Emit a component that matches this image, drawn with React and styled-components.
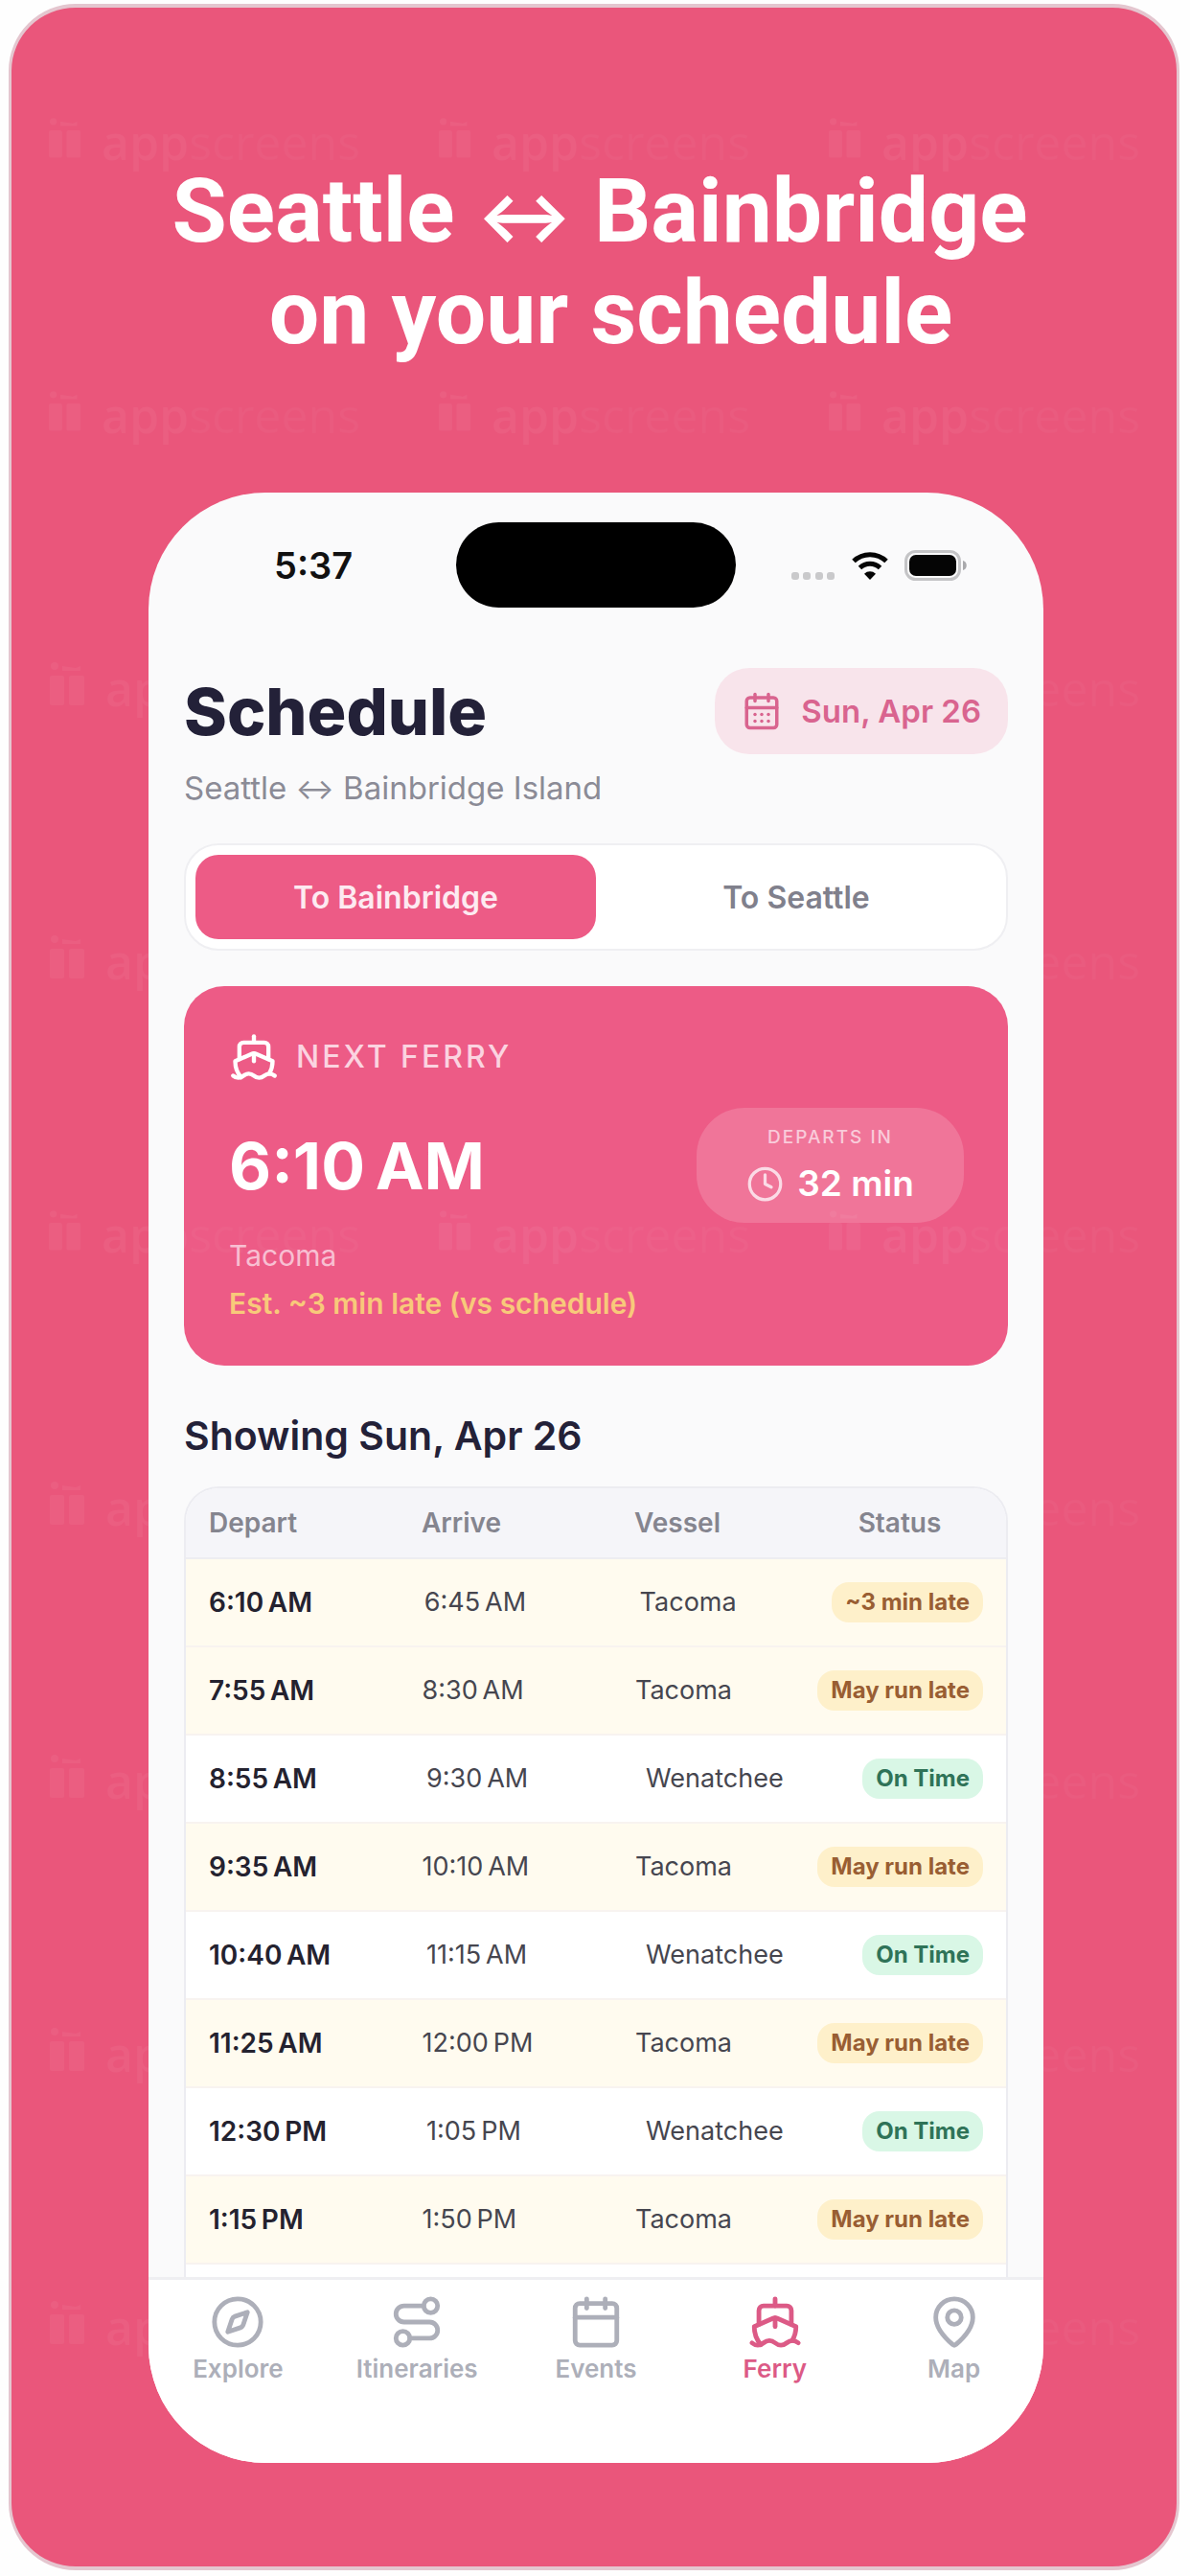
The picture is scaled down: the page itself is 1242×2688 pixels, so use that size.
import styled, { createGlobalStyle } from "styled-components";
import { CalendarDays, Calendar, Clock, Compass, MapPin, Route, Ship } from "lucide-react";

const GlobalStyle = createGlobalStyle`
*, *::before, *::after {
box-sizing: border-box;
}
body {
margin: 0;
background-color: #fefefe;
font-family: Inter, "Liberation Sans", sans-serif;
}
h1, h2, p {
margin: 0;
}
`

const Page = styled.div`
padding: 4px 11px 6px 9px;
`
const Poster = styled.main`
position: relative;
overflow: hidden;
padding: 160px 139px 108px 143px;
border: 3px solid #e4c6cf;
border-top-width: 4px;
border-bottom-width: 4px;
border-radius: 70px;
background-color: #ea567b;
`
const Headline = styled.p`
padding-left: 8px;
font-family: Roboto, Inter, sans-serif;
font-size: 93px;
font-weight: 700;
line-height: 106px;
text-align: center;
white-space: pre;
color: #fff;
`
const Arrow = styled.span`
font-family: Inter, sans-serif;
font-size: ${({ $size }) => $size}px;
line-height: 1;
`

const Watermarks = styled.div`
position: absolute;
inset: 0;
display: grid;
grid-template-columns: repeat(3, 407px);
grid-auto-rows: 285px;
padding: 108px 0 0 28px;
overflow: hidden;
pointer-events: none;
`
const Mark = styled.div`
display: flex;
align-items: flex-start;
justify-content: ${({ $end }) => ($end ? "flex-end" : "flex-start")};
gap: 18px;
width: 336px;
font-family: "Open Sans", sans-serif;
font-size: 50px;
line-height: 64px;
color: rgba(255, 255, 255, 0.03);
`
const MarkStrong = styled.b`
font-weight: 600;
color: rgba(255, 255, 255, 0.05);
`

const Phone = styled.div`
margin-top: 134px;
overflow: hidden;
border-radius: 122px;
background-color: #fafafb;
`
const StatusBar = styled.div`
display: grid;
grid-template-columns: 1fr 292px 1fr;
align-items: center;
padding-top: 31px;
`
const Time = styled.span`
padding-left: 131px;
font-size: 38px;
font-weight: 600;
line-height: 50px;
color: #111;
`
const Island = styled.div`
height: 89px;
border-radius: 45px;
background-color: #000;
`
const StatusIcons = styled.div`
display: flex;
align-items: center;
justify-content: flex-end;
gap: 17px;
padding-right: 80px;
`

const Content = styled.div`
padding: 63px 37px 0;
`
const Header = styled.header`
display: flex;
justify-content: space-between;
align-items: center;
`
const Title = styled.h1`
font-size: 68px;
font-weight: 800;
line-height: 90px;
color: #232138;
`
const DateButton = styled.button`
display: flex;
align-items: center;
gap: 20px;
height: 90px;
padding: 0 28px;
border: none;
border-radius: 36px;
background-color: #f8e4eb;
font-family: inherit;
font-size: 33px;
font-weight: 600;
color: #d9648f;
`
const Subtitle = styled.p`
margin-top: 15px;
font-size: 33px;
line-height: 40px;
color: #8b8b96;
`
const Segmented = styled.div`
display: flex;
margin-top: 38px;
padding: 10px;
border: 2px solid #efeff2;
border-radius: 36px;
background-color: #fff;
`
const Segment = styled.button`
flex: 1;
height: 88px;
border: none;
border-radius: 24px;
background-color: ${({ $active }) => ($active ? "#ed5b86" : "transparent")};
font-family: inherit;
font-size: 32px;
font-weight: 600;
color: ${({ $active }) => ($active ? "#fdeaf1" : "#80808c")};
`

const FerryCard = styled.section`
margin-top: 37px;
padding: 48px 46px 40px 47px;
border-radius: 42px;
background-color: #ed5b86;
color: #fff;
`
const CardLabel = styled.p`
display: flex;
align-items: center;
gap: 18px;
font-size: 32px;
font-weight: 500;
line-height: 50px;
letter-spacing: 3px;
color: #fbd3e0;
`
const CardRow = styled.div`
display: flex;
justify-content: space-between;
align-items: center;
margin-top: 27px;
margin-bottom: 9px;
`
const NextTime = styled.p`
font-size: 68px;
font-weight: 700;
line-height: 80px;
`
const Countdown = styled.div`
display: flex;
flex-direction: column;
align-items: center;
gap: 12px;
width: 279px;
padding: 17px 0 19px;
border-radius: 50px;
background-color: rgba(255, 255, 255, 0.16);
`
const CountdownLabel = styled.span`
font-size: 19px;
font-weight: 500;
line-height: 28px;
letter-spacing: 2px;
color: #f9cbda;
`
const CountdownValue = styled.span`
display: flex;
align-items: center;
gap: 14px;
font-size: 37px;
font-weight: 600;
line-height: 44px;
`
const CardNote = styled.p`
font-size: 30px;
font-weight: ${({ $late }) => ($late ? 600 : 400)};
line-height: 50px;
color: ${({ $late }) => ($late ? "#f8c97a" : "#f8bfd2")};
`

const ListTitle = styled.h2`
margin-top: 48px;
font-size: 41px;
font-weight: 600;
line-height: 50px;
color: #232138;
`
const TableFrame = styled.div`
margin-top: 28px;
padding-bottom: 13px;
overflow: hidden;
border: 2px solid #ececf1;
border-bottom: none;
border-radius: 36px 36px 0 0;
background-color: #fff;
`
const Table = styled.table`
display: block;
line-height: 36px;
color: #46464f;
thead, tbody {
display: block;
}
`
const columns = {
    head: "222fr 222fr 190fr 174fr",
    late: "224fr 224fr 200fr auto",
    risk: "222fr 222fr 190fr auto",
    ok: "227fr 229fr 226fr auto",
}
const Row = styled.tr`
display: grid;
grid-template-columns: ${({ $kind }) => columns[$kind]};
align-items: center;
height: ${({ $kind }) => ($kind === "head" ? 74 : 92)}px;
padding: 0 24px;
border-bottom: 2px solid ${({ $kind }) => ($kind === "head" ? "#ededf1" : "#f8f3f0")};
background-color: ${({ $kind }) => ({ head: "#f5f5f9", ok: "#fff" })[$kind] || "#fffbef"};
`
const HeadCell = styled.th`
padding: 0;
font-size: 28px;
font-weight: 600;
text-align: ${({ $center }) => ($center ? "center" : "left")};
color: #85858f;
`
const Cell = styled.td`
padding: 0;
font-size: ${({ $strong }) => ($strong ? 28 : 27)}px;
font-weight: ${({ $strong }) => ($strong ? 600 : 400)};
color: ${({ $strong }) => ($strong ? "#24222f" : "inherit")};
`
const Badge = styled.span`
display: block;
padding: 3px 14px;
border-radius: 18px;
background-color: ${({ $kind }) => ($kind === "ok" ? "#d9f7e6" : "#fef0ca")};
font-size: 24px;
font-weight: 700;
color: ${({ $kind }) => ($kind === "ok" ? "#2f7358" : "#995e33")};
`

const TabBar = styled.nav`
display: grid;
grid-template-columns: repeat(5, 1fr);
padding: 15px 0 82px;
border-top: 3px solid #efeff2;
background-color: #fff;
`
const Tab = styled.a`
display: flex;
flex-direction: column;
align-items: center;
gap: 4px;
font-size: 26px;
font-weight: 600;
line-height: 32px;
text-decoration: none;
color: ${({ $active }) => ($active ? "#dc5a86" : "#adafb9")};
`

const sailings = [
    { depart: "6:10\u202fAM", arrive: "6:45\u202fAM", vessel: "Tacoma", status: "~3 min late", kind: "late" },
    { depart: "7:55\u202fAM", arrive: "8:30\u202fAM", vessel: "Tacoma", status: "May run late", kind: "risk" },
    { depart: "8:55\u202fAM", arrive: "9:30\u202fAM", vessel: "Wenatchee", status: "On Time", kind: "ok" },
    { depart: "9:35\u202fAM", arrive: "10:10\u202fAM", vessel: "Tacoma", status: "May run late", kind: "risk" },
    { depart: "10:40\u202fAM", arrive: "11:15\u202fAM", vessel: "Wenatchee", status: "On Time", kind: "ok" },
    { depart: "11:25\u202fAM", arrive: "12:00\u202fPM", vessel: "Tacoma", status: "May run late", kind: "risk" },
    { depart: "12:30\u202fPM", arrive: "1:05\u202fPM", vessel: "Wenatchee", status: "On Time", kind: "ok" },
    { depart: "1:15\u202fPM", arrive: "1:50\u202fPM", vessel: "Tacoma", status: "May run late", kind: "risk" },
]

const tabs = [
    { label: "Explore", icon: Compass },
    { label: "Itineraries", icon: Route },
    { label: "Events", icon: Calendar },
    { label: "Ferry", icon: Ship, active: true },
    { label: "Map", icon: MapPin },
]

// rows where the mark shows across the full width, the others show at the sides only
const openRows = [0, 1, 4]

const MarkLogo = () => (
    <svg width="52" height="64" viewBox="0 0 52 64" fill="#fff" fillOpacity="0.05">
        <circle cx="17" cy="9" r="4" />
        <path d="M25 9l14 2 5-2v5H25z" />
        <rect x="12" y="19" width="15" height="31" rx="2" />
        <rect x="32" y="19" width="16" height="31" rx="2" />
    </svg>
)

const WatermarkLayer = () => (
    <Watermarks aria-hidden="true">
        {Array.from({ length: 27 }, (_, i) => {
            const column = i % 3
            if (openRows.includes(Math.floor(i / 3))) {
                return <Mark key={i}><MarkLogo /><span><MarkStrong>app</MarkStrong>screens</span></Mark>
            }
            if (column === 0) return <Mark key={i}><MarkLogo /><MarkStrong>ap</MarkStrong></Mark>
            if (column === 2) return <Mark key={i} $end>eens</Mark>
            return <div key={i} />
        })}
    </Watermarks>
)

const SignalIcons = () => (
    <StatusIcons>
        <svg width="46" height="32" viewBox="0 0 46 32" fill="#c9c9cb">
            <rect x="0" y="23" width="8" height="8" rx="3" />
            <rect x="12" y="23" width="8" height="8" rx="3" />
            <rect x="25" y="23" width="8" height="8" rx="3" />
            <rect x="37" y="23" width="8" height="8" rx="3" />
        </svg>
        <svg width="38" height="32" viewBox="0 0 38 32" fill="none" stroke="#050505" strokeWidth="5">
            <path d="M2 11.5a24.5 24.5 0 0 1 34 0" />
            <path d="M8.5 18.5a15 15 0 0 1 21 0" />
            <path d="M19 31l-6-6.300a8.700 8.700 0 0 1 12 0z" fill="#050505" stroke="none" />
        </svg>
        <svg width="65" height="32" viewBox="0 0 65 32">
            <rect x="1.500" y="1.500" width="56" height="29" rx="10" fill="#fafafb" stroke="#c4c4c6" strokeWidth="3" />
            <rect x="5" y="5" width="49" height="22" rx="7" fill="#050505" />
            <path d="M61 11c5 1 5 9 0 10z" fill="#a9a9ac" />
        </svg>
    </StatusIcons>
)

const Timetable = () => (
    <TableFrame>
        <Table>
            <thead>
                <Row $kind="head">
                    <HeadCell>Depart</HeadCell>
                    <HeadCell>Arrive</HeadCell>
                    <HeadCell>Vessel</HeadCell>
                    <HeadCell $center>Status</HeadCell>
                </Row>
            </thead>
            <tbody>
                {sailings.map(({ depart, arrive, vessel, status, kind }) => (
                    <Row key={depart} $kind={kind}>
                        <Cell $strong>{depart}</Cell>
                        <Cell>{arrive}</Cell>
                        <Cell>{vessel}</Cell>
                        <Cell><Badge $kind={kind}>{status}</Badge></Cell>
                    </Row>
                ))}
            </tbody>
        </Table>
    </TableFrame>
)

const App = () => {
    return (
    <Page>
        <GlobalStyle />
        <Poster>
            <Headline>Seattle <Arrow $size={74}>↔</Arrow>{" Bainbridge\n on your schedule"}</Headline>
            <Phone>
                <StatusBar>
                    <Time>5:37</Time>
                    <Island />
                    <SignalIcons />
                </StatusBar>
                <Content>
                    <Header>
                        <Title>Schedule</Title>
                        <DateButton type="button"><CalendarDays size={42} />Sun, Apr 26</DateButton>
                    </Header>
                    <Subtitle>Seattle <Arrow $size={30}>↔</Arrow> Bainbridge Island</Subtitle>
                    <Segmented>
                        <Segment type="button" aria-pressed="true" $active>To Bainbridge</Segment>
                        <Segment type="button" aria-pressed="false">To Seattle</Segment>
                    </Segmented>
                    <FerryCard>
                        <CardLabel><Ship size={52} color="#fff" />NEXT FERRY</CardLabel>
                        <CardRow>
                            <NextTime>{"6:10\u202fAM"}</NextTime>
                            <Countdown>
                                <CountdownLabel>DEPARTS IN</CountdownLabel>
                                <CountdownValue><Clock size={39} color="#fbdbe6" />32 min</CountdownValue>
                            </Countdown>
                        </CardRow>
                        <CardNote>Tacoma</CardNote>
                        <CardNote $late>Est. ~3 min late (vs schedule)</CardNote>
                    </FerryCard>
                    <ListTitle>Showing Sun, Apr 26</ListTitle>
                    <Timetable />
                </Content>
                <TabBar>
                    {tabs.map(({ label, icon: Icon, active }) => (
                        <Tab key={label} href={`#${label.toLowerCase()}`} $active={active}>
                            <Icon size={58} />{label}
                        </Tab>
                    ))}
                </TabBar>
            </Phone>
            <WatermarkLayer />
        </Poster>
    </Page>)
}
export default App;
